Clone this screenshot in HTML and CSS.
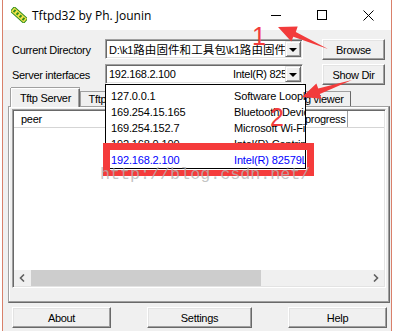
FILE: index.html
```html
<!DOCTYPE html>
<html lang="zh-CN">
<head>
    <meta charset="UTF-8">
    <title>Tftpd32 by Ph. Jounin</title>
    <link rel="stylesheet" href="styles.css">
</head>
<body>
<div class="desk">

    <!-- Main window -->
    <div class="window">
        <div class="titlebar">
            <svg class="app-icon" viewBox="0 0 16 16">
                <g transform="rotate(42 8 8)">
                    <rect x="-1" y="5" width="18" height="6" fill="#f4e24a" stroke="#2f8f1f" stroke-width="1"/>
                    <rect x="1" y="6.5" width="2" height="3" fill="#2f8f1f"/>
                    <rect x="5" y="6.5" width="2" height="3" fill="#2f8f1f"/>
                    <rect x="9" y="6.5" width="2" height="3" fill="#2f8f1f"/>
                    <rect x="13" y="6.5" width="2" height="3" fill="#2f8f1f"/>
                </g>
            </svg>
            <span class="title">Tftpd32 by Ph. Jounin</span>
            <div class="controls">
                <span class="ctl"><span class="ctl-min"></span></span>
                <span class="ctl"><span class="ctl-max"></span></span>
                <span class="ctl">
                    <svg width="11" height="11" viewBox="0 0 11 11"><path d="M0.5 0.5 L10.5 10.5 M10.5 0.5 L0.5 10.5" stroke="#000" stroke-width="1"/></svg>
                </span>
            </div>
        </div>

        <div class="client">
            <!-- Directory and interface -->
            <div class="form">
                <label class="lbl">Current Directory</label>
                <div class="combo">
                    <span class="combo-text combo-wide">D:\k1<span class="cjk">路由固件和工具包</span>\k1<span class="cjk">路由固件</span></span>
                    <span class="combo-btn"><span class="tri"></span></span>
                </div>
                <button class="btn">Browse</button>

                <label class="lbl">Server interfaces</label>
                <div class="combo">
                    <span class="combo-text">192.168.2.100</span>
                    <span class="combo-desc">Intel(R) 82579LM</span>
                    <span class="combo-btn"><span class="tri"></span></span>
                </div>
                <button class="btn">Show Dir</button>
            </div>

            <!-- Tabs -->
            <div class="tabs">
                <span class="tab tab-active">Tftp Server</span>
                <span class="tab tab-client">Tftp Client</span>
                <span class="tab tab-dhcp">DHCP server</span>
                <span class="tab tab-syslog">Syslog server</span>
                <span class="tab tab-log">Log viewer</span>
            </div>

            <div class="panel">
                <div class="listview">
                    <div class="lv-header">
                        <span class="col col-peer">peer</span>
                        <span class="col col-progress">progress</span>
                        <span class="col col-rest"></span>
                    </div>
                    <div class="lv-body"></div>
                    <div class="hscroll">
                        <span class="sb-arrow">
                            <svg width="7" height="8" viewBox="0 0 7 8"><path d="M5 0.5 L1.5 4 L5 7.5" fill="none" stroke="#606060" stroke-width="1.6"/></svg>
                        </span>
                        <span class="sb-thumb"></span>
                        <span class="sb-track"></span>
                        <span class="sb-arrow">
                            <svg width="7" height="8" viewBox="0 0 7 8"><path d="M2 0.5 L5.5 4 L2 7.5" fill="none" stroke="#606060" stroke-width="1.6"/></svg>
                        </span>
                    </div>
                </div>
            </div>

            <div class="footer">
                <button class="btn btn-about">About</button>
                <button class="btn btn-settings">Settings</button>
                <button class="btn btn-help">Help</button>
            </div>
        </div>
    </div>

    <!-- Open interface list -->
    <div class="droplist">
        <div class="item"><span>127.0.0.1</span><span>Software Loopback</span></div>
        <div class="item"><span>169.254.15.165</span><span>Bluetooth Device</span></div>
        <div class="item"><span>169.254.152.7</span><span>Microsoft Wi-Fi</span></div>
        <div class="item"><span>192.168.0.100</span><span>Intel(R) Centrino</span></div>
        <div class="item item-sel"><span>192.168.2.100</span><span>Intel(R) 82579LM</span></div>
    </div>

    <!-- Annotations -->
    <div class="mark-box"></div>
    <div class="watermark">http://blog.csdn.net/</div>
    <svg class="arrows" width="393" height="331" viewBox="0 0 393 331">
        <polygon fill="#f23b3b" points="328,49 295.8,31.9 297.7,26.5 278,27 291.3,41.6 293.3,36.7"/>
        <polygon fill="#f23b3b" points="352,80 318.2,88.4 316.4,83.6 302,97 321.6,98.8 319.8,93.9"/>
    </svg>
    <span class="num num-1">1</span>
    <span class="num num-2">2</span>
</div>
</body>
</html>
```

FILE: styles.css
```css
* {
    box-sizing: border-box;
}
body {
    margin: 0;
    background: #fff;
    font-family: "Liberation Sans", "Noto Sans CJK SC", sans-serif;
    font-size: 11px;
    letter-spacing: -0.3px;
    color: #000;
    overflow: hidden;
}
.desk {
    position: relative;
    width: 393px;
    height: 331px;
}
.window {
    margin-left: 2px;
    width: 390px;
    height: 331px;
    border-left: 1px solid #d9806a;
    border-right: 1px solid #d9806a;
    background: #f0f0f0;
    display: flex;
    flex-direction: column;
}

/* title bar */
.titlebar {
    height: 30px;
    flex: none;
    background: #fff;
    display: flex;
    align-items: center;
    padding-left: 8px;
}
.app-icon {
    width: 16px;
    height: 16px;
    margin-right: 5px;
}
.title {
    flex: 1;
    font-family: "Open Sans", "Liberation Sans", sans-serif;
    font-size: 12px;
    letter-spacing: 0;
}
.controls {
    display: flex;
    height: 30px;
}
.ctl {
    width: 46px;
    display: flex;
    align-items: center;
    justify-content: center;
}
.ctl-min {
    width: 10px;
    height: 1px;
    background: #000;
}
.ctl-max {
    width: 10px;
    height: 10px;
    border: 1px solid #000;
}

/* client area */
.client {
    flex: 1;
    display: flex;
    flex-direction: column;
    padding: 9px 0 0 5px;
}
.form {
    margin-left: 4px;
    display: grid;
    grid-template-columns: 93px 217px 63px;
    grid-auto-rows: 21px;
    row-gap: 4px;
}
.lbl {
    align-self: center;
}
.combo {
    width: 198px;
    height: 20px;
    background: #fff;
    border: 1px solid;
    border-color: #a0a0a0 #fff #fff #a0a0a0;
    box-shadow: inset 1px 1px #696969, inset -1px -1px #e3e3e3;
    display: flex;
    align-items: center;
    padding: 1px 1px 1px 3px;
    overflow: hidden;
    white-space: nowrap;
}
.combo-text {
    width: 124px;
    flex: none;
}
.combo-wide {
    width: auto;
    flex: 1;
    overflow: hidden;
}
.cjk {
    font-size: 11.5px;
    letter-spacing: 0.1px;
}
.combo-desc {
    flex: 1;
    overflow: hidden;
}
.combo-btn {
    width: 16px;
    height: 16px;
    flex: none;
    background: #f0f0f0;
    border: 1px solid;
    border-color: #e3e3e3 #696969 #696969 #e3e3e3;
    box-shadow: inset 1px 1px #fff, inset -1px -1px #a0a0a0;
    display: flex;
    align-items: center;
    justify-content: center;
}
.tri {
    width: 0;
    height: 0;
    border-left: 4px solid transparent;
    border-right: 4px solid transparent;
    border-top: 4px solid #000;
    margin-top: 1px;
}
.btn {
    font: inherit;
    letter-spacing: inherit;
    color: #000;
    height: 21px;
    padding: 0;
    background: #f0f0f0;
    border: 1px solid;
    border-color: #fff #696969 #696969 #fff;
    box-shadow: inset -1px -1px #a0a0a0, inset 1px 1px #e3e3e3;
}

/* tabs */
.tabs {
    margin-top: 3px;
    height: 18px;
    display: flex;
    align-items: flex-end;
    padding-left: 3px;
}
.tab {
    height: 15px;
    display: flex;
    align-items: center;
    justify-content: center;
    white-space: nowrap;
    overflow: hidden;
    border: 1px solid #a0a0a0;
    border-right-color: #696969;
    border-bottom: none;
    background: #f0f0f0;
}
.tab-active {
    position: relative;
    z-index: 1;
    width: 69px;
    height: 19px;
    margin-bottom: -1px;
    border-color: #fff #696969 #f0f0f0 #fff;
    box-shadow: inset -1px 0 #a0a0a0, -1px 0 #a0a0a0, 0 -1px #a0a0a0;
}
.tab-client { width: 64px; }
.tab-dhcp { width: 70px; }
.tab-syslog { width: 72px; }
.tab-log { width: 65px; }

.panel {
    width: 382px;
    height: 197px;
    flex: none;
    border: 1px solid;
    border-color: #a0a0a0 #696969 #696969 #a0a0a0;
    box-shadow: inset -1px -1px #a0a0a0, inset 1px 1px #fff;
    padding: 2px 3px 14px 3px;
}
.listview {
    height: 179px;
    background: #fff;
    border: 1px solid;
    border-color: #a0a0a0 #fff #fff #a0a0a0;
    box-shadow: inset 1px 1px #696969, inset -1px -1px #e3e3e3;
    padding: 1px;
    display: flex;
    flex-direction: column;
}
.lv-header {
    height: 17px;
    flex: none;
    display: flex;
    border-bottom: 1px solid #d5d5d5;
}
.col {
    display: flex;
    align-items: center;
    border-right: 1px solid #e5e5e5;
    white-space: nowrap;
}
.col-peer {
    width: 288px;
    padding-left: 7px;
}
.col-progress {
    width: 46px;
    padding-left: 3px;
    border-right-color: #a0a0a0;
}
.col-rest {
    flex: 1;
    border-right: none;
}
.lv-body {
    flex: 1;
}
.hscroll {
    height: 16px;
    flex: none;
    display: flex;
    background: #f0f0f0;
}
.sb-arrow {
    width: 17px;
    display: flex;
    align-items: center;
    justify-content: center;
}
.sb-thumb {
    width: 230px;
    background: #cdcdcd;
}
.sb-track {
    flex: 1;
}

.footer {
    margin: 4px 0 0 4px;
    width: 375px;
    display: flex;
    justify-content: space-between;
}
.btn-about, .btn-help {
    width: 99px;
}
.btn-settings {
    width: 105px;
}

/* dropdown list */
.droplist {
    position: absolute;
    left: 105px;
    top: 84px;
    width: 201px;
    height: 85px;
    background: #fff;
    border: 1px solid #000;
    padding: 3px 0 0 5px;
    letter-spacing: -0.15px;
    overflow: hidden;
}
.item {
    height: 16px;
    display: grid;
    grid-template-columns: 123px 1fr;
    align-items: center;
    white-space: nowrap;
}
.item span {
    overflow: hidden;
}
.item-sel {
    color: #0000ff;
}

/* annotations */
.mark-box {
    position: absolute;
    left: 103px;
    top: 143px;
    width: 211px;
    height: 33px;
    border: 7px solid #f53b3b;
    border-bottom-width: 6px;
}
.watermark {
    position: absolute;
    left: 100px;
    top: 165px;
    font-family: "Liberation Mono", monospace;
    font-size: 16.7px;
    letter-spacing: 0;
    color: rgba(180, 180, 180, 0.8);
}
.arrows {
    position: absolute;
    left: 0;
    top: 0;
}
.num {
    position: absolute;
    font-family: "Liberation Sans", sans-serif;
    font-size: 25px;
    line-height: 25px;
    letter-spacing: 0;
    color: #f23b3b;
}
.num-1 {
    left: 252px;
    top: 24px;
}
.num-2 {
    left: 270px;
    top: 105px;
}
```
